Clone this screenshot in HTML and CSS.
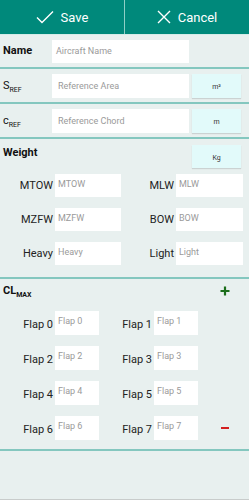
FILE: index.html
```html
<!DOCTYPE html>
<html>
<head>
<meta charset="utf-8">
<link rel="stylesheet" href="styles.css">
</head>
<body>
<div class="header">
  <div class="hbtn">
    <svg width="18" height="14" viewBox="0 0 18 14"><path d="M1 7.5 L6 12.5 L17 1.5" fill="none" stroke="#fff" stroke-width="1.4"/></svg>
    <span>Save</span>
  </div>
  <div class="hdiv"></div>
  <div class="hbtn">
    <svg width="14" height="14" viewBox="0 0 14 14"><path d="M1 1 L13 13 M13 1 L1 13" fill="none" stroke="#fff" stroke-width="1.4"/></svg>
    <span>Cancel</span>
  </div>
</div>
<div class="hline"></div>

<div class="sec s-name">
  <div class="lbl bold">Name</div>
  <div class="inp wide">Aircraft Name</div>
</div>
<div class="sep"></div>
<div class="sec s-ref">
  <div class="lbl">S<sub>REF</sub></div>
  <div class="inp wide">Reference Area</div>
  <div class="unit">m²</div>
</div>
<div class="sep"></div>
<div class="sec s-ref">
  <div class="lbl">c<sub>REF</sub></div>
  <div class="inp wide">Reference Chord</div>
  <div class="unit">m</div>
</div>
<div class="sep"></div>
<div class="sec s-weight">
  <div class="titlerow">
    <div class="lbl bold">Weight</div>
    <div class="unit kg">Kg</div>
  </div>
  <div class="grid">
    <div class="pair"><div class="wl">MTOW</div><div class="inp w1">MTOW</div></div>
    <div class="pair"><div class="wl">MLW</div><div class="inp w2">MLW</div></div>
    <div class="pair"><div class="wl">MZFW</div><div class="inp w1">MZFW</div></div>
    <div class="pair"><div class="wl">BOW</div><div class="inp w2">BOW</div></div>
    <div class="pair"><div class="wl">Heavy</div><div class="inp w1">Heavy</div></div>
    <div class="pair"><div class="wl">Light</div><div class="inp w2">Light</div></div>
  </div>
</div>
<div class="sep"></div>
<div class="sec s-cl">
  <div class="titlerow cl">
    <div class="lbl bold">CL<sub>MAX</sub></div>
    <svg class="plus" width="10" height="10" viewBox="0 0 10 10"><path d="M5 0.5 V9.5 M0.5 5 H9.5" stroke="#1b6e1b" stroke-width="2.2"/></svg>
  </div>
  <div class="flaps">
    <div class="frow"><div class="fl">Flap 0</div><div class="inp f">Flap 0</div><div class="fl">Flap 1</div><div class="inp f">Flap 1</div></div>
    <div class="frow"><div class="fl">Flap 2</div><div class="inp f">Flap 2</div><div class="fl">Flap 3</div><div class="inp f">Flap 3</div></div>
    <div class="frow"><div class="fl">Flap 4</div><div class="inp f">Flap 4</div><div class="fl">Flap 5</div><div class="inp f">Flap 5</div></div>
    <div class="frow"><div class="fl">Flap 6</div><div class="inp f">Flap 6</div><div class="fl">Flap 7</div><div class="inp f">Flap 7</div><div class="minus"></div></div>
  </div>
</div>
<div class="sep"></div>
<div class="rest"></div>
</body>
</html>
```
FILE: styles.css
```css
html, body {
  margin: 0;
  padding: 0;
}
body {
  width: 249px;
  height: 500px;
  background: #e8f0ef;
  font-family: Roboto, "Noto Sans", sans-serif;
  color: #1c1c1c;
  overflow: hidden;
  position: relative;
}
.header {
  height: 34px;
  background: #00897b;
  display: flex;
  color: #fff;
}
.hbtn {
  flex: 1;
  display: flex;
  align-items: center;
  justify-content: center;
  gap: 7px;
  font-size: 13px;
}
.hbtn svg { display: block; }
.hdiv {
  width: 1px;
  background: #8fcfc6;
}
.hline {
  height: 1px;
  background: #d4ece8;
}
.sep {
  height: 2px;
  background: #84c7bf;
}
.sec {
  display: flex;
}
.lbl {
  font-size: 11px;
  color: #111;
  width: 49px;
  padding-left: 3px;
}
.bold { font-weight: bold; }
.lbl sub {
  font-size: 7px;
  vertical-align: -3px;
}
.inp {
  background: #fff;
  font-size: 9px;
  color: #9a9a9a;
  box-sizing: border-box;
  padding: 6px 0 0 3px;
}
.s-name {
  height: 32px;
  padding-top: 5px;
  box-sizing: border-box;
}
.s-name .lbl { padding-top: 4px; }
.s-name .inp { height: 23px; padding-left: 4px; }
.wide { width: 137px; height: 24px; }
.s-ref {
  height: 33px;
  padding-top: 5px;
  box-sizing: border-box;
}
.s-ref .lbl { padding-top: 5px; font-size: 11px; }
.s-ref .inp { padding-top: 7px; padding-left: 6px; }
.unit {
  margin-left: 3px;
  width: 49px;
  height: 24px;
  background: #e2fafa;
  box-shadow: 0 1px 1px rgba(0,0,0,0.12);
  font-size: 7px;
  color: #333;
  display: flex;
  align-items: center;
  justify-content: center;
  padding-top: 2px;
  box-sizing: border-box;
}
.s-weight {
  flex-direction: column;
  height: 138px;
  padding-top: 6px;
  box-sizing: border-box;
}
.titlerow {
  display: flex;
  justify-content: space-between;
  height: 29px;
}
.titlerow .lbl { padding-top: 1px; }
.kg {
  margin-right: 8px;
  height: 23px;
}
.grid {
  display: grid;
  grid-template-columns: 121px 128px;
  row-gap: 11px;
}
.pair {
  display: flex;
  align-items: flex-end;
}
.wl {
  width: 55px;
  text-align: right;
  font-size: 11px;
  padding-right: 2px;
  padding-bottom: 5px;
  color: #222;
  box-sizing: border-box;
}
.w1 { width: 66px; height: 23px; padding-top: 5px; }
.w2 { width: 67px; height: 23px; padding-top: 5px; }
.s-cl {
  flex-direction: column;
  height: 170px;
  padding-top: 4px;
  box-sizing: border-box;
}
.titlerow.cl { height: 28px; }
.plus {
  margin-right: 19px;
  margin-top: 3px;
}
.flaps {
  display: flex;
  flex-direction: column;
  gap: 11px;
}
.frow {
  display: flex;
  align-items: flex-end;
  height: 24px;
}
.fl {
  width: 55px;
  text-align: right;
  font-size: 11px;
  color: #222;
  padding-right: 2px;
  padding-bottom: 4px;
  box-sizing: border-box;
}
.inp.f { width: 44px; height: 24px; padding-top: 5px; }
.minus {
  width: 8px;
  height: 2px;
  background: #d32020;
  margin-left: 23px;
  align-self: center;
}
.rest {
  height: 49px;
  border-bottom: 1px solid #c8cccb;
  box-sizing: border-box;
}
```
